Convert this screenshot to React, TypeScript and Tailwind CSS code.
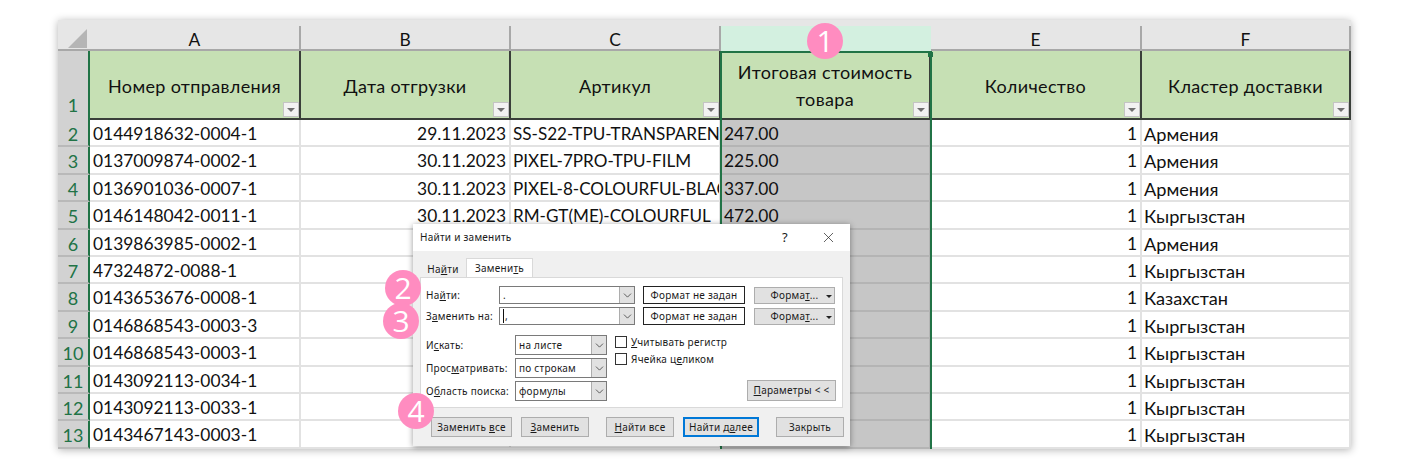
import { ChevronDown, X } from "lucide-react"
import type { ReactNode } from "react"

type Row = { id: string; date?: string; sku?: string; price?: string; region: string }

const rows: Row[] = [
  { id: "0144918632-0004-1", date: "29.11.2023", sku: "SS-S22-TPU-TRANSPARENT", price: "247.00", region: "Армения" },
  { id: "0137009874-0002-1", date: "30.11.2023", sku: "PIXEL-7PRO-TPU-FILM", price: "225.00", region: "Армения" },
  { id: "0136901036-0007-1", date: "30.11.2023", sku: "PIXEL-8-COLOURFUL-BLACK", price: "337.00", region: "Армения" },
  { id: "0146148042-0011-1", date: "30.11.2023", sku: "RM-GT(ME)-COLOURFUL", price: "472.00", region: "Кыргызстан" },
  { id: "0139863985-0002-1", region: "Армения" },
  { id: "47324872-0088-1", region: "Кыргызстан" },
  { id: "0143653676-0008-1", region: "Казахстан" },
  { id: "0146868543-0003-3", region: "Кыргызстан" },
  { id: "0146868543-0003-1", region: "Кыргызстан" },
  { id: "0143092113-0034-1", region: "Кыргызстан" },
  { id: "0143092113-0033-1", region: "Кыргызстан" },
  { id: "0143467143-0003-1", region: "Кыргызстан" },
]

const cols = ["A", "B", "C", "D", "E", "F"]
const gridCols = "grid grid-cols-[32px_211px_210px_210px_210px_211px_209px]"
const cell = "h-[27.4px] border-b-2 border-r-2 overflow-hidden whitespace-nowrap leading-[28px]"

function FilterButton() {
  return (
    <div className="absolute right-0 bottom-[1px] flex h-[15px] w-[16px] items-center justify-center border border-[#c4c4c4] bg-[#f2f2f2]">
      <div className="h-0 w-0 border-x-[4px] border-t-[4px] border-x-transparent border-t-[#6f6f6f]" />
    </div>
  )
}

function HeadCell({ children }: { children: ReactNode }) {
  return (
    <div className="relative flex h-[69px] items-center justify-center border-r-2 border-b-2 border-[#3a3f3a] bg-[#c6e0b4] pt-[3px] text-center text-[18px] leading-[27px] tracking-[0.35px]">
      {children}
      <FilterButton />
    </div>
  )
}

function Badge({ n, className }: { n: number; className: string }) {
  return (
    <div
      className={
        "absolute z-20 flex h-[36px] w-[36px] items-center justify-center rounded-full bg-[#ff8cc0] font-['Open_Sans',sans-serif] text-[30px] leading-none text-white " +
        className
      }
    >
      {n}
    </div>
  )
}

function DialogButton({ children, className }: { children: ReactNode; className: string }) {
  return <div className={"flex items-center justify-center bg-[#e1e1e1] " + className}>{children}</div>
}

function Combo({ children, className }: { children: ReactNode; className: string }) {
  return (
    <div className={"flex items-center border border-[#7a7a7a] bg-white " + className}>
      <span className="flex-1 pl-[3px]">{children}</span>
      <div className="flex h-full w-[15px] items-center justify-center border-l border-[#adadad] bg-[#e1e1e1]">
        <ChevronDown size={13} strokeWidth={1.4} color="#333" />
      </div>
    </div>
  )
}

function Checkbox({ children }: { children: ReactNode }) {
  return (
    <div className="flex h-[12px] items-center gap-[4px]">
      <div className="h-[12px] w-[12px] border border-[#333] bg-white" />
      <span>{children}</span>
    </div>
  )
}

function FormatRow({ label, value }: { label: ReactNode; value: ReactNode }) {
  return (
    <div className="flex h-[18px] items-center">
      <span className="w-[73px]">{label}</span>
      <Combo className="h-[18px] w-[136px]">{value}</Combo>
      <div className="ml-[8px] flex h-[18px] w-[102px] items-center justify-center border-[1.5px] border-[#222]">
        Формат не задан
      </div>
      <DialogButton className="relative ml-[9px] h-[17px] w-[81px] border border-[#adadad]">
        <span>Форма<u>т</u>...</span>
        <div className="absolute top-[7px] right-[2px] h-0 w-0 border-x-[3px] border-t-[3px] border-x-transparent border-t-[#222]" />
      </DialogButton>
    </div>
  )
}

function FindReplaceDialog() {
  return (
    <div className="absolute top-[224px] left-[413px] z-10 flex h-[222px] w-[437px] flex-col bg-[#f0f0f0] font-['Noto_Sans',sans-serif] text-[10px] tracking-[0.25px] text-[#1a1a1a] shadow-[0_1px_6px_rgba(0,0,0,0.4)]">
      <div className="flex h-[27px] items-center bg-white pl-[7px]">
        <span className="flex-1">Найти и заменить</span>
        <span className="mr-[32px] text-[13px]">?</span>
        <X size={17} strokeWidth={1} color="#222" className="mr-[13px]" />
      </div>

      <div className="mt-[7px] ml-[7px] flex h-[19px] items-end">
        <div className="flex h-[15px] w-[46px] items-center justify-center">
          <span>На<u>й</u>ти</span>
        </div>
        <div className="flex h-[19px] w-[67px] items-center justify-center border border-b-0 border-[#d9d9d9] bg-white">
          <span>Замени<u>т</u>ь</span>
        </div>
      </div>

      <div className="mx-[7px] h-[131px] border border-[#d9d9d9] bg-white pt-[8px] pl-[5px]">
        <FormatRow label={<>На<u>й</u>ти:</>} value="." />
        <div className="mt-[3px]">
          <FormatRow
            label={<>З<u>а</u>менить на:</>}
            value={<span className="border-l border-[#111] pl-[1px]">,</span>}
          />
        </div>

        <div className="mt-[10px] flex">
          <div className="flex flex-col gap-[3px]">
            <div className="flex h-[20px] items-center">
              <span className="w-[89px]">И<u>с</u>кать:</span>
              <Combo className="h-[20px] w-[92px]">на листе</Combo>
            </div>
            <div className="flex h-[20px] items-center">
              <span className="w-[89px]">Прос<u>м</u>атривать:</span>
              <Combo className="h-[20px] w-[92px]">по строкам</Combo>
            </div>
            <div className="flex h-[20px] items-center">
              <span className="w-[89px]">О<u>б</u>ласть поиска:</span>
              <Combo className="h-[20px] w-[92px]">формулы</Combo>
            </div>
          </div>
          <div className="ml-[8px] flex flex-col gap-[5px] pt-[1px]">
            <Checkbox><u>У</u>читывать регистр</Checkbox>
            <Checkbox>Ячейка ц<u>е</u>ликом</Checkbox>
          </div>
          <div className="flex flex-1 items-end justify-end pr-[6px]">
            <DialogButton className="h-[21px] w-[89px] border border-[#adadad]">
              <span><u>П</u>араметры &lt; &lt;</span>
            </DialogButton>
          </div>
        </div>
      </div>

      <div className="mt-[9px] ml-[18px] flex h-[20px]">
        <DialogButton className="w-[81px] border border-[#adadad]"><span>Заменить <u>в</u>се</span></DialogButton>
        <DialogButton className="ml-[9px] w-[68px] border border-[#adadad]"><span><u>З</u>аменить</span></DialogButton>
        <DialogButton className="ml-[17px] w-[68px] border border-[#adadad]"><span><u>Н</u>айти все</span></DialogButton>
        <DialogButton className="ml-[9px] w-[76px] border-2 border-[#0078d7]"><span>Найти д<u>а</u>лее</span></DialogButton>
        <DialogButton className="ml-[17px] w-[68px] border border-[#adadad]"><span>Закрыть</span></DialogButton>
      </div>
    </div>
  )
}

export default function App() {
  return (
    <div className="h-[470px] w-[1416px] overflow-hidden bg-white pt-[20px] pl-[58px]">
      <div className="relative w-[1293px] bg-white font-['Lato',sans-serif] text-[17.4px] text-[#111] shadow-[0_1px_8px_rgba(0,0,0,0.3)]">
        <div className="h-[6px] bg-[#e6e6e6]" />

        <div className={gridCols}>
          <div className="flex h-[25px] items-end justify-end border-b-2 border-[#a8a8a8] bg-[#e6e6e6] pr-[3px] pb-[1px]">
            <svg width="19" height="19" viewBox="0 0 19 19">
              <path d="M19 0V19H0Z" fill="#b5b5b5" />
            </svg>
          </div>
          {cols.map((c) => (
            <div
              key={c}
              className={
                c === "D"
                  ? "h-[25px] bg-[#d3f0e0] pt-[3px] text-center leading-[22px]"
                  : "h-[25px] border-r-2 border-b-2 border-[#a8a8a8] bg-[#e6e6e6] pt-[3px] text-center leading-[22px]"
              }
            >
              {c}
            </div>
          ))}

          <div className="flex h-[69px] items-end justify-center border-r-2 border-[#217346] bg-[#d2d2d2] pb-[1px] text-[18px] text-[#217346]">1</div>
          <HeadCell>Номер отправления</HeadCell>
          <HeadCell>Дата отгрузки</HeadCell>
          <HeadCell>Артикул</HeadCell>
          <HeadCell>
            <span>Итоговая стоимость<br />товара</span>
          </HeadCell>
          <HeadCell>Количество</HeadCell>
          <HeadCell>Кластер доставки</HeadCell>

          {rows.map((r, i) => (
            <div key={r.id} className="contents">
              <div className="h-[27.4px] border-r-2 border-b-2 border-r-[#217346] border-b-[#b9b9b9] bg-[#d2d2d2] text-center text-[18px] leading-[28px] text-[#217346]">
                {i + 2}
              </div>
              <div className={cell + " border-[#e2e2e2] px-[3px]"}>{r.id}</div>
              <div className={cell + " border-[#e2e2e2] px-[3px] text-right"}>{r.date}</div>
              <div className={cell + " border-[#e2e2e2] px-[2px] text-[17.1px]"}>{r.sku}</div>
              <div className={cell + " border-[#b4b4b4] bg-[#c6c6c6] px-[3px]"}>{r.price}</div>
              <div className={cell + " border-[#e2e2e2] px-[3px] text-right"}>1</div>
              <div className={cell + " border-[#e2e2e2] px-[2px] text-[18.2px]"}>{r.region}</div>
            </div>
          ))}
        </div>

        {/* selection frame on column D */}
        <div className="pointer-events-none absolute top-[31px] bottom-0 left-[662px] w-[212px] border-2 border-b-0 border-[#217346]">
          <div className="absolute -top-[1px] -right-[3px] h-[5px] w-[5px] bg-[#217346]" />
        </div>
      </div>

      <FindReplaceDialog />

      <Badge n={1} className="top-[23px] left-[807px]" />
      <Badge n={2} className="top-[270px] left-[385px]" />
      <Badge n={3} className="top-[303px] left-[383px]" />
      <Badge n={4} className="top-[393px] left-[398px]" />
    </div>
  )
}
